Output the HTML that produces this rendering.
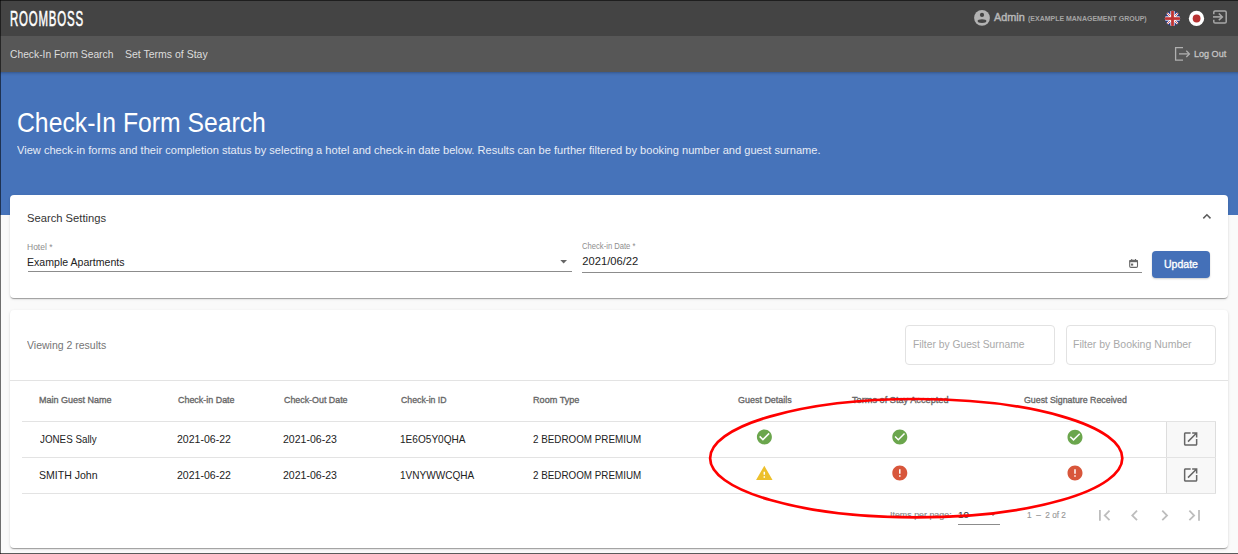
<!DOCTYPE html>
<html><head><meta charset="utf-8"><style>
html,body{margin:0;padding:0;}
body{width:1238px;height:554px;overflow:hidden;position:relative;background:#fafafa;font-family:"Liberation Sans",sans-serif;}
.a{position:absolute;}
.t{position:absolute;line-height:0;white-space:nowrap;transform-origin:0 0;font-family:"Liberation Sans",sans-serif;}
#top{left:0;top:0;width:1238px;height:36px;background:#444444;}
#topline{left:0;top:0;width:1238px;height:1px;background:#1e1e1e;}
#nav{left:0;top:36px;width:1238px;height:36px;background:#575757;}
#navsh{left:0;top:72px;width:1238px;height:4px;background:linear-gradient(rgba(0,0,0,0.22),rgba(0,0,0,0.06) 50%,rgba(0,0,0,0));}
#banner{left:0;top:72px;width:1238px;height:143px;background:#4673ba;}
#leftb{left:0;top:0;width:1px;height:554px;background:rgba(0,0,0,0.56);}
#botb{left:0;top:553px;width:1238px;height:1px;background:rgba(0,0,0,0.64);}
.card{background:#fff;border-radius:4px;box-shadow:0 2px 1px -1px rgba(0,0,0,.2),0 1px 1px 0 rgba(0,0,0,.14),0 1px 3px 0 rgba(0,0,0,.12);}
#c1{left:10px;top:195px;width:1218px;height:103px;}
#c2{left:10px;top:310px;width:1218px;height:238px;}
.ul{height:1px;background:#8c8c8c;}
#btn{left:1152px;top:251px;width:58px;height:27px;background:#4470b8;border-radius:4px;box-shadow:0 1px 2px rgba(0,0,0,0.2);}
.fbox{box-sizing:border-box;width:150px;height:40px;border:1px solid #e2e2e2;border-radius:4px;top:325px;background:#fff;}
.hl{height:1px;background:#e3e3e3;}
#act{left:1166px;top:421px;width:50px;height:72px;background:#f8f8f8;box-sizing:border-box;border-left:1px solid #dddddd;border-right:1px solid #dddddd;}

</style></head><body>
<div class="a" id="top"></div>
<div class="a" id="topline"></div>
<div class="a" id="nav"></div>
<div class="a" id="banner"></div>
<div class="a" id="navsh"></div>
<div class="a card" id="c1"></div>
<div class="a card" id="c2"></div>
<div class="a ul" style="left:28px;top:271px;width:544px;"></div>
<div class="a ul" style="left:582px;top:272px;width:560px;"></div>
<div class="a" id="btn"></div>
<div class="a fbox" style="left:905px;"></div>
<div class="a fbox" style="left:1066px;"></div>
<div class="a hl" style="left:10px;top:380px;width:1218px;"></div>
<div class="a" id="act"></div>
<div class="a hl" style="left:22px;top:421px;width:1194px;"></div>
<div class="a hl" style="left:22px;top:457px;width:1194px;"></div>
<div class="a hl" style="left:22px;top:493px;width:1194px;"></div>
<div class="a ul" style="left:958px;top:524px;width:42px;"></div>
<svg class="a" style="left:0;top:0" width="1238" height="554" viewBox="0 0 1238 554">
  <!-- avatar -->
  <circle cx="982" cy="17.9" r="7.9" fill="#b3b3b3"/>
  <circle cx="982" cy="14.9" r="2.1" fill="#444"/>
  <ellipse cx="982" cy="21.1" rx="4.4" ry="1.9" fill="#444"/>
  <!-- UK flag -->
  <defs><clipPath id="ukc"><circle cx="1172.5" cy="18.45" r="7.6"/></clipPath></defs>
  <g clip-path="url(#ukc)">
    <rect x="1164" y="10" width="17" height="17" fill="#2b3a86"/>
    <path d="M1164 10L1181 27M1181 10L1164 27" stroke="#fff" stroke-width="2.2"/>
    <path d="M1164 10L1181 27M1181 10L1164 27" stroke="#c83a3a" stroke-width="0.8"/>
    <rect x="1164" y="16.4" width="17" height="4.2" fill="#fff"/>
    <rect x="1170.4" y="10" width="4.2" height="17" fill="#fff"/>
    <rect x="1164" y="17.2" width="17" height="2.7" fill="#c03232"/>
    <rect x="1171.1" y="10" width="2.8" height="17" fill="#c03232"/>
  </g>
  <!-- JP flag -->
  <circle cx="1196.5" cy="18.45" r="7.65" fill="#fff"/>
  <circle cx="1196.6" cy="18.5" r="3.9" fill="#b83232"/>
  <!-- input icon -->
  <path d="M1213.8 14.2V12.2Q1213.8 10.9 1215.1 10.9H1224.9Q1226.2 10.9 1226.2 12.2V21.8Q1226.2 23.1 1224.9 23.1H1215.1Q1213.8 23.1 1213.8 21.8V19.7" fill="none" stroke="#a8a8a8" stroke-width="1.5"/>
  <path d="M1213 16.9H1222" stroke="#a8a8a8" stroke-width="1.6"/>
  <path d="M1218.8 13.5L1222.3 16.9L1218.8 20.3" fill="none" stroke="#a8a8a8" stroke-width="1.6"/>
  <!-- logout icon -->
  <path d="M1183 47.6H1175.6V60.1H1183" fill="none" stroke="#b0b0b0" stroke-width="1.3"/>
  <path d="M1179 53.9H1189" stroke="#b0b0b0" stroke-width="1.3"/>
  <path d="M1186.3 50.8L1189.4 53.9L1186.3 57" fill="none" stroke="#b0b0b0" stroke-width="1.3"/>
  <!-- chevron up -->
  <path d="M1203.3 218.4L1206.9 214.8L1210.5 218.4" fill="none" stroke="#5c5c5c" stroke-width="1.5"/>
  <!-- dropdown arrow hotel -->
  <path d="M560.3 260L567 260L563.65 263.4Z" fill="#666"/>
  <!-- calendar -->
  <rect x="1129.7" y="260.4" width="7.8" height="7" rx="1.2" fill="none" stroke="#666" stroke-width="1.1"/>
  <rect x="1129.5" y="260" width="8.2" height="2.2" fill="#666"/>
  <rect x="1131.2" y="259" width="1" height="1.5" fill="#666"/>
  <rect x="1135" y="259" width="1" height="1.5" fill="#666"/>
  <rect x="1131" y="263.6" width="2.2" height="2" fill="#666"/>
  <!-- status icons -->
  <g transform="translate(755.4 427.9) scale(0.75)"><path fill="#6ba64d" d="M12 2C6.48 2 2 6.48 2 12s4.48 10 10 10 10-4.48 10-10S17.52 2 12 2zm-2 15l-5-5 1.41-1.41L10 14.17l7.59-7.59L19 8l-9 9z"/></g>
  <g transform="translate(890.8 428) scale(0.75)"><path fill="#6ba64d" d="M12 2C6.48 2 2 6.48 2 12s4.48 10 10 10 10-4.48 10-10S17.52 2 12 2zm-2 15l-5-5 1.41-1.41L10 14.17l7.59-7.59L19 8l-9 9z"/></g>
  <g transform="translate(1066 428.2) scale(0.75)"><path fill="#6ba64d" d="M12 2C6.48 2 2 6.48 2 12s4.48 10 10 10 10-4.48 10-10S17.52 2 12 2zm-2 15l-5-5 1.41-1.41L10 14.17l7.59-7.59L19 8l-9 9z"/></g>
  <g transform="translate(755.3 464.3) scale(0.75)"><path fill="#edc02c" d="M1 21h22L12 2 1 21zm12-3h-2v-2h2v2zm0-4h-2v-4h2v4z"/></g>
  <g transform="translate(890.8 464) scale(0.75)"><path fill="#d8563b" d="M12 2C6.48 2 2 6.48 2 12s4.48 10 10 10 10-4.48 10-10S17.52 2 12 2zm1 15h-2v-2h2v2zm0-4h-2V7h2v6z"/></g>
  <g transform="translate(1066 464) scale(0.75)"><path fill="#d8563b" d="M12 2C6.48 2 2 6.48 2 12s4.48 10 10 10 10-4.48 10-10S17.52 2 12 2zm1 15h-2v-2h2v2zm0-4h-2V7h2v6z"/></g>
  <!-- open in new -->
  <g transform="translate(1181.65 430) scale(0.75)"><path fill="#666" d="M19 19H5V5h7V3H5c-1.11 0-2 .9-2 2v14c0 1.1.89 2 2 2h14c1.1 0 2-.9 2-2v-7h-2v7zM14 3v2h3.59l-9.83 9.83 1.41 1.41L19 6.41V10h2V3h-7z"/></g>
  <g transform="translate(1181.65 466) scale(0.75)"><path fill="#666" d="M19 19H5V5h7V3H5c-1.11 0-2 .9-2 2v14c0 1.1.89 2 2 2h14c1.1 0 2-.9 2-2v-7h-2v7zM14 3v2h3.59l-9.83 9.83 1.41 1.41L19 6.41V10h2V3h-7z"/></g>
  <!-- pagination dropdown -->
  <path d="M990 513L996 513L993 516Z" fill="#777"/>
  <!-- pagination icons -->
  <g transform="translate(1093.6 504.6) scale(0.9)"><path fill="#bdbdbd" d="M18.41 16.59L13.82 12l4.59-4.59L17 6l-6 6 6 6zM6 6h2v12H6z"/></g>
  <g transform="translate(1123.8 504.6) scale(0.9)"><path fill="#bdbdbd" d="M15.41 7.41L14 6l-6 6 6 6 1.41-1.41L10.83 12z"/></g>
  <g transform="translate(1153.9 504.6) scale(0.9)"><path fill="#bdbdbd" d="M10 6L8.59 7.41 13.17 12l-4.58 4.59L10 18l6-6z"/></g>
  <g transform="translate(1183.7 504.6) scale(0.9)"><path fill="#bdbdbd" d="M5.59 7.41L10.18 12l-4.59 4.59L7 18l6-6-6-6zM16 6h2v12h-2z"/></g>
</svg>

<div class="t" style="left:9.95px;top:19px;font-size:21.8px;font-weight:400;color:#ffffff;letter-spacing:1.5px;-webkit-text-stroke:0.55px #fff;transform:scaleX(0.5265)">ROOMBOSS</div>
<div class="t" style="left:993.80px;top:17px;font-size:11.4px;font-weight:400;color:#b8b8b8;letter-spacing:0px;-webkit-text-stroke:0.45px #b8b8b8;transform:scaleX(0.9531)">Admin</div>
<div class="t" style="left:1027.80px;top:19px;font-size:7.8px;font-weight:700;color:#a4a4a4;letter-spacing:0px;transform:scaleX(0.8955)">(EXAMPLE MANAGEMENT GROUP)</div>
<div class="t" style="left:10.35px;top:54px;font-size:11.4px;font-weight:400;color:#dddddd;letter-spacing:0px;transform:scaleX(0.9022)">Check-In Form Search</div>
<div class="t" style="left:124.68px;top:54px;font-size:11.4px;font-weight:400;color:#dddddd;letter-spacing:0px;transform:scaleX(0.9213)">Set Terms of Stay</div>
<div class="t" style="left:1193.78px;top:54px;font-size:9.8px;font-weight:400;color:#c4c4c4;letter-spacing:0px;-webkit-text-stroke:0.3px #c4c4c4;transform:scaleX(0.9235)">Log Out</div>
<div class="t" style="left:17.30px;top:123px;font-size:27.4px;font-weight:400;color:#ffffff;letter-spacing:0px;transform:scaleX(0.9033)">Check-In Form Search</div>
<div class="t" style="left:17.00px;top:150px;font-size:11.4px;font-weight:400;color:#e6ecf6;letter-spacing:0px;transform:scaleX(0.9728)">View check-in forms and their completion status by selecting a hotel and check-in date below. Results can be further filtered by booking number and guest surname.</div>
<div class="t" style="left:26.82px;top:218px;font-size:11.4px;font-weight:400;color:#333333;letter-spacing:0px;transform:scaleX(0.9835)">Search Settings</div>
<div class="t" style="left:27.31px;top:247px;font-size:8.6px;font-weight:400;color:#8e8e8e;letter-spacing:0px;transform:scaleX(0.9875)">Hotel *</div>
<div class="t" style="left:27.17px;top:262px;font-size:11.4px;font-weight:400;color:#222222;letter-spacing:0px;transform:scaleX(0.9279)">Example Apartments</div>
<div class="t" style="left:582.30px;top:246px;font-size:8.6px;font-weight:400;color:#8e8e8e;letter-spacing:0px;transform:scaleX(0.8883)">Check-in Date *</div>
<div class="t" style="left:582.30px;top:261px;font-size:11.2px;font-weight:400;color:#222222;letter-spacing:0px;transform:scaleX(1.0000)">2021/06/22</div>
<div class="t" style="left:1163.56px;top:264px;font-size:11.2px;font-weight:400;color:#ffffff;letter-spacing:0px;-webkit-text-stroke:0.35px #fff;transform:scaleX(0.9400)">Update</div>
<div class="t" style="left:26.80px;top:345px;font-size:11.4px;font-weight:400;color:#757575;letter-spacing:0px;transform:scaleX(0.9221)">Viewing 2 results</div>
<div class="t" style="left:912.75px;top:344px;font-size:11.4px;font-weight:400;color:#a9a9a9;letter-spacing:0px;transform:scaleX(0.9029)">Filter by Guest Surname</div>
<div class="t" style="left:1072.78px;top:344px;font-size:11.4px;font-weight:400;color:#a9a9a9;letter-spacing:0px;transform:scaleX(0.9228)">Filter by Booking Number</div>
<div class="t" style="left:38.86px;top:400px;font-size:9.6px;font-weight:400;color:#686868;letter-spacing:0px;-webkit-text-stroke:0.35px #686868;transform:scaleX(0.9395)">Main Guest Name</div>
<div class="t" style="left:177.60px;top:400px;font-size:9.6px;font-weight:400;color:#686868;letter-spacing:0px;-webkit-text-stroke:0.35px #686868;transform:scaleX(0.9300)">Check-in Date</div>
<div class="t" style="left:283.50px;top:400px;font-size:9.6px;font-weight:400;color:#686868;letter-spacing:0px;-webkit-text-stroke:0.35px #686868;transform:scaleX(0.9235)">Check-Out Date</div>
<div class="t" style="left:400.80px;top:400px;font-size:9.6px;font-weight:400;color:#686868;letter-spacing:0px;-webkit-text-stroke:0.35px #686868;transform:scaleX(0.9100)">Check-in ID</div>
<div class="t" style="left:532.65px;top:400px;font-size:9.6px;font-weight:400;color:#686868;letter-spacing:0px;-webkit-text-stroke:0.35px #686868;transform:scaleX(0.9489)">Room Type</div>
<div class="t" style="left:738.00px;top:400px;font-size:9.6px;font-weight:400;color:#686868;letter-spacing:0px;-webkit-text-stroke:0.35px #686868;transform:scaleX(0.9333)">Guest Details</div>
<div class="t" style="left:852.30px;top:400px;font-size:9.6px;font-weight:400;color:#686868;letter-spacing:0px;-webkit-text-stroke:0.35px #686868;transform:scaleX(0.9580)">Terms of Stay Accepted</div>
<div class="t" style="left:1023.50px;top:400px;font-size:9.6px;font-weight:400;color:#686868;letter-spacing:0px;-webkit-text-stroke:0.35px #686868;transform:scaleX(0.9179)">Guest Signature Received</div>
<div class="t" style="left:39.60px;top:439px;font-size:11.4px;font-weight:400;color:#222222;letter-spacing:0px;transform:scaleX(0.8606)">JONES Sally</div>
<div class="t" style="left:176.58px;top:439px;font-size:11.4px;font-weight:400;color:#222222;letter-spacing:0px;transform:scaleX(0.9246)">2021-06-22</div>
<div class="t" style="left:282.58px;top:439px;font-size:11.4px;font-weight:400;color:#222222;letter-spacing:0px;transform:scaleX(0.9246)">2021-06-23</div>
<div class="t" style="left:399.82px;top:439px;font-size:11.4px;font-weight:400;color:#222222;letter-spacing:0px;transform:scaleX(0.8849)">1E6O5Y0QHA</div>
<div class="t" style="left:532.84px;top:439px;font-size:11.4px;font-weight:400;color:#222222;letter-spacing:0px;transform:scaleX(0.8637)">2 BEDROOM PREMIUM</div>
<div class="t" style="left:38.67px;top:475px;font-size:11.4px;font-weight:400;color:#222222;letter-spacing:0px;transform:scaleX(0.9258)">SMITH John</div>
<div class="t" style="left:176.58px;top:475px;font-size:11.4px;font-weight:400;color:#222222;letter-spacing:0px;transform:scaleX(0.9246)">2021-06-22</div>
<div class="t" style="left:282.58px;top:475px;font-size:11.4px;font-weight:400;color:#222222;letter-spacing:0px;transform:scaleX(0.9246)">2021-06-23</div>
<div class="t" style="left:399.82px;top:475px;font-size:11.4px;font-weight:400;color:#222222;letter-spacing:0px;transform:scaleX(0.8807)">1VNYWWCQHA</div>
<div class="t" style="left:532.84px;top:475px;font-size:11.4px;font-weight:400;color:#222222;letter-spacing:0px;transform:scaleX(0.8637)">2 BEDROOM PREMIUM</div>
<div class="t" style="left:890.08px;top:515px;font-size:9.6px;font-weight:400;color:#888888;letter-spacing:0px;-webkit-text-stroke:0.15px #888888;transform:scaleX(0.9246)">Items per page:</div>
<div class="t" style="left:957.67px;top:515px;font-size:9.6px;font-weight:400;color:#3a3a3a;letter-spacing:0px;-webkit-text-stroke:0.15px #3a3a3a;transform:scaleX(1.0333)">10</div>
<div class="t" style="left:1026.94px;top:515px;font-size:9.6px;font-weight:400;color:#989898;letter-spacing:0px;-webkit-text-stroke:0.15px #989898;transform:scaleX(0.8568)">1  –  2 of 2</div>
<svg class="a" style="left:0;top:0" width="1238" height="554" viewBox="0 0 1238 554">
  <ellipse cx="916.2" cy="458.2" rx="206.1" ry="59.2" fill="none" stroke="#f00" stroke-width="2.7"/>
</svg>
<div class="a" id="leftb"></div>
<div class="a" id="botb"></div>

</body></html>
